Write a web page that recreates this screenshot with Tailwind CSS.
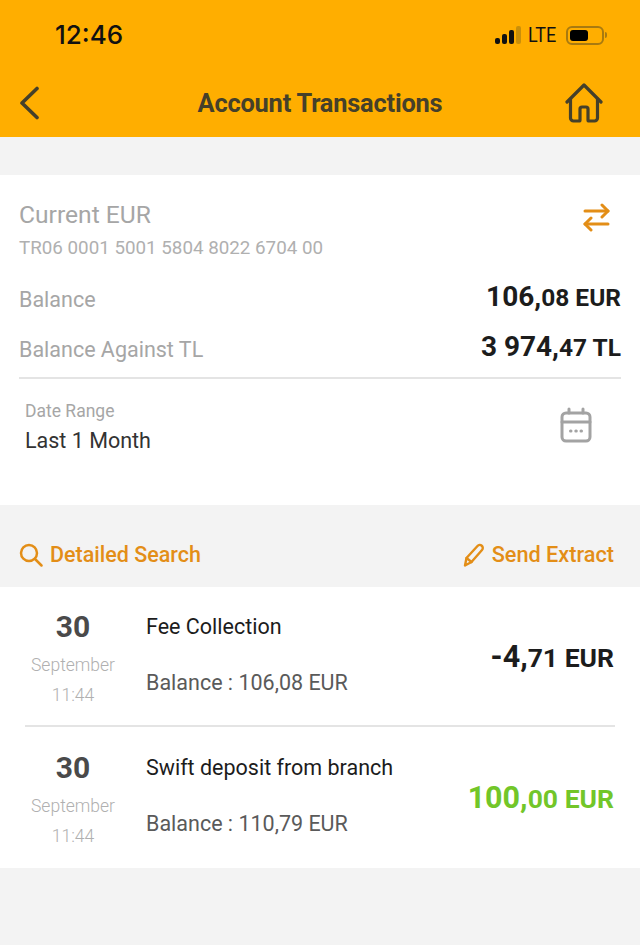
<!DOCTYPE html>
<html lang="en">
<head>
    <meta charset="UTF-8">
    <meta name="viewport" content="width=device-width, initial-scale=1.0">
    <title>Account Transactions</title>
    <script src="https://cdn.jsdelivr.net/npm/@tailwindcss/browser@4"></script>
</head>
<body class="bg-[#f3f3f3] font-['Roboto',sans-serif] h-[945px] w-[640px] overflow-hidden">
    <!-- Header -->
    <header class="bg-[#ffae00] h-[137px]">
        <div class="h-[70px] flex items-center justify-between pl-[55px] pr-[33px]">
            <span class="text-[26px] font-medium leading-none text-[#111] font-['Inter',sans-serif]">12:46</span>
            <div class="flex items-center">
                <div class="flex items-end gap-[2px] h-[18px] mr-[7px]">
                    <span class="w-[5px] h-[6px] bg-[#111] rounded-[2px]"></span>
                    <span class="w-[5px] h-[10px] bg-[#111] rounded-[2px]"></span>
                    <span class="w-[5px] h-[14px] bg-[#111] rounded-[2px]"></span>
                    <span class="w-[5px] h-[18px] bg-[#c98f0a] rounded-[2px]"></span>
                </div>
                <span class="text-[20px] leading-none text-[#111] mr-[8px] scale-x-[0.9] origin-left w-[30px]">LTE</span>
                <div class="w-[38px] h-[19px] border-2 border-[#a87a10] rounded-[6px] p-[2px]">
                    <div class="w-[18px] h-full bg-black rounded-[3px]"></div>
                </div>
                <span class="w-[2px] h-[6px] bg-[#a87a10] ml-[1px] rounded-r-sm"></span>
            </div>
        </div>
        <div class="h-[67px] flex items-center justify-between pl-[18px] pr-[37px] pb-[2px] relative">
            <svg width="24" height="34" viewBox="0 0 24 34" fill="none" stroke="#45402a" stroke-width="3.6" stroke-linecap="round" stroke-linejoin="round"><path d="M19 2.500 4 17l15 14.500"/></svg>
            <h1 class="absolute inset-x-0 mt-[2px] text-center text-[25.400px] font-bold text-[#45402a] leading-none tracking-[-0.2px]">Account Transactions</h1>
            <svg width="38" height="40" viewBox="0 0 38 40" fill="none" stroke="#45402a" stroke-width="3.2" stroke-linecap="round" stroke-linejoin="round"><path d="M2 19 19 2l17 17"/><path d="M5.500 16v19a3 3 0 0 0 3 3H14a1 1 0 0 0 1-1V26a2 2 0 0 1 2-2h4a2 2 0 0 1 2 2v11a1 1 0 0 0 1 1h5.500a3 3 0 0 0 3-3V16"/></svg>
        </div>
    </header>

    <!-- Account card -->
    <section class="mt-[38px] bg-white h-[330px] px-[19px] flex flex-col">
        <div class="flex justify-between pt-[25px] h-[56px]">
            <p class="text-[24.600px] leading-[30px] text-[#a6a6a6]">Current EUR</p>
            <svg class="mr-[10px] mt-[3px]" width="28" height="30" viewBox="0 0 28 30" fill="none" stroke="#e38e17" stroke-width="3" stroke-linecap="round" stroke-linejoin="round"><path d="M2 8h23"/><path d="M19 2l6 6-6 6"/><path d="M25 21H2"/><path d="M8 15l-6 6 6 6"/></svg>
        </div>
        <p class="text-[18.800px] leading-[24px] mt-[5px] text-[#b0b0b0]">TR06 0001 5001 5804 8022 6704 00</p>
        <div class="flex justify-between items-center mt-[24px] h-[32px]">
            <span class="text-[21.500px] text-[#a6a6a6]">Balance</span>
            <span class="font-bold text-[#1c1c1c] text-[28px] leading-none -mt-[7px]">106,<span class="text-[24.500px]">08 EUR</span></span>
        </div>
        <div class="flex justify-between items-center mt-[18px] h-[32px]">
            <span class="text-[21.500px] text-[#a6a6a6]">Balance Against TL</span>
            <span class="font-bold text-[#1c1c1c] text-[28px] leading-none -mt-[7px]">3 974,<span class="text-[24.500px]">47 TL</span></span>
        </div>
        <div class="h-[2px] bg-[#e4e4e4] mt-[11px]"></div>
        <div class="flex justify-between px-[6px] pt-[22px]">
            <div>
                <p class="text-[17.500px] leading-[20px] text-[#a6a6a6]">Date Range</p>
                <p class="text-[21.500px] leading-[26px] mt-[7px] text-[#333]">Last 1 Month</p>
            </div>
            <svg class="mr-[23px] mt-[6px]" width="32" height="36" viewBox="0 0 32 36" fill="none" stroke="#a3a3a3" stroke-width="3" stroke-linecap="round" stroke-linejoin="round"><rect x="2" y="6" width="28" height="28" rx="4"/><path d="M2 15h28M9 2v4M23 2v4"/><path d="M10.500 24h.5M15.800 24h.5M21 24h.5"/></svg>
        </div>
    </section>

    <!-- Actions -->
    <div class="h-[82px] flex items-center justify-between pl-[19px] pr-[26px] pt-[18px] text-[21.500px] font-medium text-[#e38e17]">
        <div class="flex items-center gap-[7px]">
            <svg width="24" height="24" viewBox="0 0 24 24" fill="none" stroke="#e38e17" stroke-width="2.500" stroke-linecap="round"><circle cx="10" cy="10" r="8"/><path d="m16 16 6.500 6.500"/></svg>
            <span>Detailed Search</span>
        </div>
        <div class="flex items-center gap-[7px]">
            <svg width="22" height="24" viewBox="0 0 22 24" fill="none" stroke="#e38e17" stroke-width="2.400" stroke-linecap="round" stroke-linejoin="round"><path d="M2 22.500 3.500 15 14.500 3a3 3 0 0 1 4.500 4L8.500 19z"/><path d="M3.500 15l5 4"/></svg>
            <span class="text-[21.700px]">Send Extract</span>
        </div>
    </div>

    <!-- Transactions -->
    <section class="bg-white h-[281px] px-[25px]">
        <div class="h-[140px] flex items-center border-b-2 border-[#e4e4e4]">
            <div class="w-[96px] text-center mt-[6px]">
                <p class="text-[30px] leading-[36px] font-bold text-[#4a4a4a]">30</p>
                <p class="text-[17.500px] leading-[30px] mt-[5px] font-light text-[#b0b0b0]">September</p>
                <p class="text-[17.500px] leading-[30px] font-light text-[#b0b0b0]">11:44</p>
            </div>
            <div class="ml-[25px] flex-1 -mt-[2px]">
                <p class="text-[21.500px] leading-[28px] text-[#1c1c1c]">Fee Collection</p>
                <p class="text-[21.500px] leading-[28px] mt-[28px] text-[#5a5a5a]">Balance : 106,08 EUR</p>
            </div>
            <span class="font-bold text-[#1c1c1c] text-[30.500px] leading-none mt-[3px] mr-[1px]">-4,<span class="text-[26.500px]">71 EUR</span></span>
        </div>
        <div class="h-[139px] flex items-center">
            <div class="w-[96px] text-center mt-[7px]">
                <p class="text-[30px] leading-[36px] font-bold text-[#4a4a4a]">30</p>
                <p class="text-[17.500px] leading-[30px] mt-[5px] font-light text-[#b0b0b0]">September</p>
                <p class="text-[17.500px] leading-[30px] font-light text-[#b0b0b0]">11:44</p>
            </div>
            <div class="ml-[25px] flex-1 -mt-[2px]">
                <p class="text-[21.500px] leading-[28px] text-[#1c1c1c]">Swift deposit from branch</p>
                <p class="text-[21.500px] leading-[28px] mt-[28px] text-[#5a5a5a]">Balance : 110,79 EUR</p>
            </div>
            <span class="font-bold text-[#72c629] text-[30.500px] leading-none mt-[3px] mr-[1px]">100,<span class="text-[26.500px]">00 EUR</span></span>
        </div>
    </section>
</body>
</html>
